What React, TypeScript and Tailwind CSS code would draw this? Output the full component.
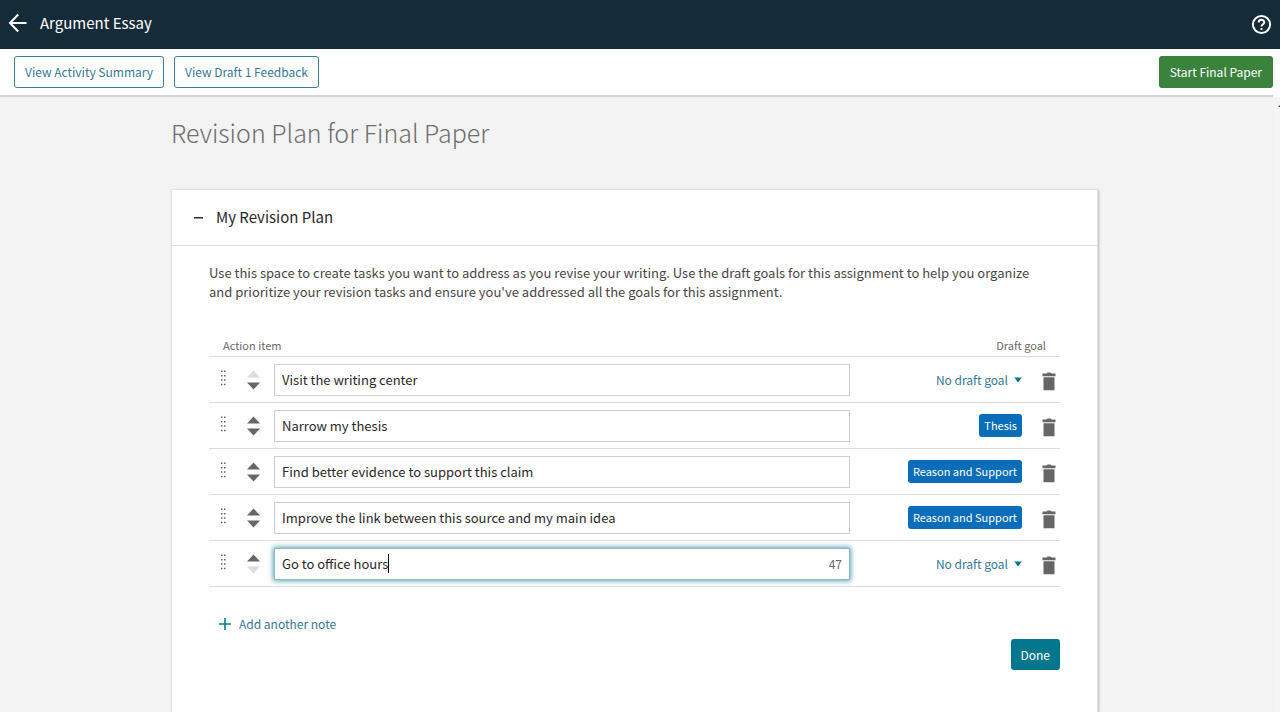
import {useState} from "react";

type Item = {
    id: number
    text: string
    goal: string
    remaining?: number
}

const initialItems: Item[] = [
    {id: 1, text: "Visit the writing center", goal: ""},
    {id: 2, text: "Narrow my thesis", goal: "Thesis"},
    {id: 3, text: "Find better evidence to support this claim", goal: "Reason and Support"},
    {id: 4, text: "Improve the link between this source and my main idea", goal: "Reason and Support"},
    {id: 5, text: "Go to office hours", goal: "", remaining: 47},
]

export default function App() {

    return (
        <div
            className={"flex min-h-screen flex-col bg-[#f3f3f3] font-['Noto_Sans_CJK_SC',sans-serif] text-[#2b2728]"}>
            <TopBar/>
            <Toolbar/>
            <div className={"flex grow"}>
                <main className={"flex grow flex-col items-center pr-[29px] pl-6"}>
                    <div className={"flex w-full max-w-[927px] grow flex-col"}>
                        <h1 className={"mt-[19px] mb-[41px] text-[25px] leading-8 font-light text-[#6f6d6d]"}>
                            Revision Plan for Final Paper
                        </h1>
                        <PlanCard/>
                    </div>
                </main>
                <ScrollStrip/>
            </div>
        </div>
    )
}

const TopBar = () => {

    return (
        <header className={"flex h-[49px] items-center justify-between bg-[#152b37] px-2 text-white"}>
            <div className={"mb-1 flex items-center gap-3"}>
                <button type="button" aria-label="Back">
                    <svg width="20" height="20" viewBox="0 0 20 20" fill="none" stroke="currentColor" strokeWidth="2">
                        <path d="M10.2 1.5 2 10l8.2 8.5M2 10h16.5"/>
                    </svg>
                </button>
                <div className={"text-[15px] leading-5"}>Argument Essay</div>
            </div>
            <button type="button" aria-label="Help">
                <svg width="21" height="21" viewBox="0 0 21 21" fill="none" stroke="currentColor" strokeWidth="2">
                    <circle cx="10.5" cy="10.5" r="8.6"/>
                    <path d="M7.7 8.6c0-3.6 5.6-3.6 5.6-.3 0 1.9-2.8 2-2.8 4.2"/>
                    <path d="M10.5 14v2"/>
                </svg>
            </button>
        </header>
    )
}

const Toolbar = () => {

    return (
        <div className={"bg-white pr-[7px]"}>
            <div
                className={"flex h-12 items-center justify-between border-b-2 border-[#d2d2d2] pl-3.5 text-xs"}>
                <div className={"flex gap-2.5"}>
                    <OutlineButton label="View Activity Summary"/>
                    <OutlineButton label="View Draft 1 Feedback"/>
                </div>
                <button type="button" className={"h-8 rounded-[3px] bg-[#3b833d] px-[11px] text-white"}>
                    Start Final Paper
                </button>
            </div>
        </div>
    )
}

const OutlineButton = ({label}: { label: string }) => {

    return (
        <button type="button" className={"h-8 rounded-[3px] border border-[#3b7f9b] px-2.5 text-[#347a95]"}>
            {label}
        </button>
    )
}

const PlanCard = () => {

    const [items, setItems] = useState(initialItems)

    const update = (id: number, patch: Partial<Item>) =>
        setItems(items.map((item) => item.id === id ? {...item, ...patch} : item))

    const move = (index: number, step: number) => {
        const next = [...items]
        const [item] = next.splice(index, 1)
        next.splice(index + step, 0, item)
        setItems(next)
    }

    return (
        <section className={"grow border border-b-0 border-[#e2e2e2] bg-white shadow-[1px_1px_2px_#bbb]"}>
            <button type="button"
                    className={"flex h-14 w-full items-center gap-3 border-b border-[#e2e2e2] px-[22px] text-[15px]"}>
                <svg width="10" height="2" viewBox="0 0 10 2" fill="currentColor">
                    <path d="M0 0h9v1.5H0z"/>
                </svg>
                My Revision Plan
            </button>

            <div className={"px-[37px] pt-[17px]"}>
                <p className={"pr-2 text-[13px] leading-[19px] text-[#4a4646]"}>
                    Use this space to create tasks you want to address as you revise your writing. Use the draft
                    goals for this assignment to help you organize and prioritize your revision tasks and ensure
                    you've addressed all the goals for this assignment.
                </p>

                <table className={"mt-[34px] w-full border-collapse"}>
                    <thead>
                    <tr className={"border-b border-[#dcdcdc] text-[11px] leading-5 text-[#6b6969]"}>
                        <th scope="col" colSpan={3} className={"pb-px pl-3.5 text-left font-normal"}>Action item</th>
                        <th scope="col" colSpan={2} className={"pr-3.5 pb-px text-right font-normal"}>Draft goal</th>
                    </tr>
                    </thead>
                    <tbody>
                    {items.map((item, index) => (
                        <ItemRow
                            key={item.id}
                            item={item}
                            first={index === 0}
                            last={index === items.length - 1}
                            onChange={(patch) => update(item.id, patch)}
                            onMove={(step) => move(index, step)}
                            onRemove={() => setItems(items.filter((i) => i.id !== item.id))}
                        />
                    ))}
                    </tbody>
                </table>

                <button
                    type="button"
                    className={"mt-[27px] ml-2.5 flex items-center gap-2 text-xs leading-5 text-[#347a95]"}
                    onClick={() => setItems([...items, {id: Date.now(), text: "", goal: ""}])}
                >
                    <svg width="12" height="12" viewBox="0 0 12 12" stroke="#047a9c" strokeWidth="1.6">
                        <path d="M6 0v12M0 6h12"/>
                    </svg>
                    Add another note
                </button>

                <div className={"mt-[5px] flex justify-end"}>
                    <button type="button" className={"h-[31px] rounded-[3px] bg-[#04778f] px-2.5 text-xs text-white"}>
                        Done
                    </button>
                </div>
            </div>
        </section>
    )
}

type RowProps = {
    item: Item
    first: boolean
    last: boolean
    onChange: (patch: Partial<Item>) => void
    onMove: (step: number) => void
    onRemove: () => void
}

const ItemRow = ({item, first, last, onChange, onMove, onRemove}: RowProps) => {

    return (
        <tr className={"h-[46px] border-b border-[#dcdcdc]"}>
            <td className={"w-[37px] pl-3"}>
                <DragHandle/>
            </td>
            <td className={"w-7"}>
                <div className={"flex w-[15px] flex-col gap-1"}>
                    <button type="button" aria-label="Move up" disabled={first}
                            className={"text-[#666] disabled:text-[#dcdcdc]"} onClick={() => onMove(-1)}>
                        <svg width="15" height="8" viewBox="0 0 15 8" fill="currentColor" className={"block"}>
                            <path d="M7.5 0.5 14 7.5H1z"/>
                        </svg>
                    </button>
                    <button type="button" aria-label="Move down" disabled={last}
                            className={"text-[#666] disabled:text-[#dcdcdc]"} onClick={() => onMove(1)}>
                        <svg width="15" height="8" viewBox="0 0 15 8" fill="currentColor" className={"block"}>
                            <path d="M7.5 7.5 14 0.5H1z"/>
                        </svg>
                    </button>
                </div>
            </td>
            <td>
                {item.remaining ? (
                    <div
                        className={"flex h-8 items-center border border-[#8fb9c4] px-[7px] shadow-[0_0_5px_1px_#55a5b5]"}>
                        <input
                            aria-label="Action item"
                            className={"field-sizing-content text-[13px] leading-5 caret-transparent outline-none"}
                            value={item.text}
                            onChange={(e) => onChange({text: e.target.value})}
                        />
                        <span className={"h-[19px] w-px bg-black"}/>
                        <span className={"ml-auto text-xs text-[#6b6969]"}>{item.remaining}</span>
                    </div>
                ) : (
                    <input
                        aria-label="Action item"
                        className={"block h-8 w-full border border-[#cfcfcf] px-[7px] text-[13px] leading-5 outline-none"}
                        value={item.text}
                        onChange={(e) => onChange({text: e.target.value})}
                    />
                )}
            </td>
            <td className={"w-[172px]"}>
                <div className={"flex justify-end"}>
                    {item.goal
                        ? <GoalTag goal={item.goal} onClear={() => onChange({goal: ""})}/>
                        : <GoalSelect onChange={(goal) => onChange({goal})}/>}
                </div>
            </td>
            <td className={"w-[38px]"}>
                <button type="button" aria-label="Delete" className={"mt-1 mr-1 ml-auto block text-[#666]"}
                        onClick={onRemove}>
                    <svg width="14" height="19" viewBox="0 0 14 19" fill="currentColor" className={"block"}>
                        <path d="M.5 1.5h4L5.5.5h3l1 1h4v2.7H.5zM1.5 5.2h11v13h-11z"/>
                    </svg>
                </button>
            </td>
        </tr>
    )
}

const DragHandle = () => {

    return (
        <svg width="5" height="16" viewBox="0 0 5 16" fill="#666" className={"mb-1"}>
            <path
                d="M0 .5h1.5V2H0zM3 .5h1.5V2H3zM0 4.9h1.5v1.5H0zM3 4.9h1.5v1.5H3zM0 9.3h1.5v1.5H0zM3 9.3h1.5v1.5H3zM0 13.7h1.5v1.5H0zM3 13.7h1.5v1.5H3z"/>
        </svg>
    )
}

const GoalTag = ({goal, onClear}: { goal: string, onClear: () => void }) => {

    return (
        <button type="button"
                className={"h-[23px] rounded-[3px] bg-[#0a6db9] px-[5px] text-[11px] text-white"}
                onClick={onClear}>
            {goal}
        </button>
    )
}

const GoalSelect = ({onChange}: { onChange: (goal: string) => void }) => {

    return (
        <label className={"flex items-center gap-1.5 text-[#347a95]"}>
            <select
                aria-label="Draft goal"
                className={"field-sizing-content appearance-none text-xs leading-5 outline-none"}
                value=""
                onChange={(e) => onChange(e.target.value)}
            >
                <option value="">No draft goal</option>
                <option>Thesis</option>
                <option>Reason and Support</option>
            </select>
            <svg width="8" height="6" viewBox="0 0 8 6" fill="#04778f">
                <path d="M.3.5h7.4L4 5.5z"/>
            </svg>
        </label>
    )
}

const ScrollStrip = () => {

    return (
        <div className={"flex w-1.5 justify-end bg-[#f5f5f5]"}>
            <svg width="2" height="2" viewBox="0 0 2 2" fill="#444" className={"mt-2"}>
                <path d="M0 2 2 0v2z"/>
            </svg>
        </div>
    )
}
